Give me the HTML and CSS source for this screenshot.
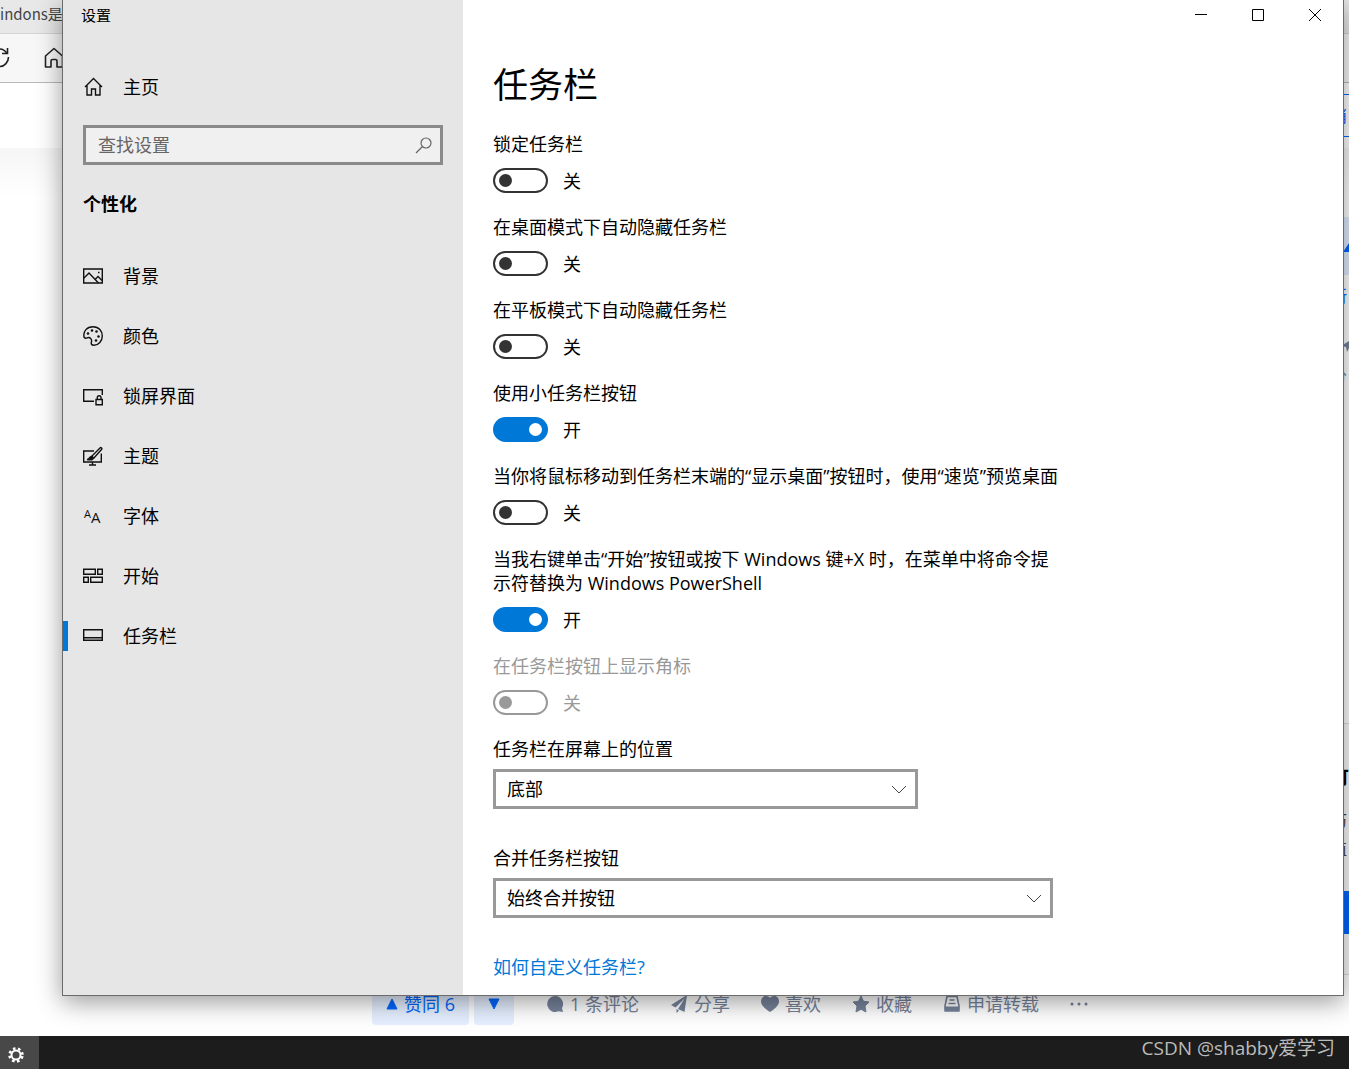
FILE: index.html
```html
<!DOCTYPE html>
<html lang="zh-CN">
<head>
<meta charset="utf-8">
<title>设置</title>
<link rel="stylesheet" href="styles.css">
</head>
<body>
<div class="desktop">
  <div class="browser">
    <div class="tabs">indons是否</div>
    <div class="toolbar">
      <svg width="18" height="24" viewBox="0 0 18 24" fill="none" stroke="#222" stroke-width="1.600"><path d="M0 3c3 0 5 1.500 7 4.500M7.500 2v5.500H2M8.500 11c0 5-4 9.500-8.500 9.500"/></svg>
      <svg width="20" height="22" viewBox="0 0 20 22" fill="none" stroke="#222" stroke-width="1.600"><path d="M1.500 9 10 1.500 18.500 9v11h-5.500v-6q0-1.500-1.500-1.500h-3q-1.500 0-1.500 1.500v6H1.500z" stroke-linejoin="round"/></svg>
    </div>
    <div class="page">
      <div class="page-head"></div>
      <div class="edge">
        <div class="edge-button">消</div>
        <div class="edge-vote"><svg width="16" height="12" viewBox="0 0 16 12"><path d="M8 0 16 12H0z" fill="#0066ff"/></svg></div>
        <div class="edge-link">所</div>
        <svg class="edge-share" width="16" height="16" viewBox="0 0 16 16"><path d="M0 10 16 0 13 16 8 12 6 16 5 11z" fill="#76839b"/></svg>
        <div class="edge-muted">分</div>
        <div class="edge-card">
          <div class="edge-title">可</div>
          <div class="edge-text">历</div>
          <div class="edge-text">值</div>
          <div class="edge-primary"></div>
        </div>
      </div>
    </div>
    <div class="actions">
      <button class="vote"><svg width="12" height="12" viewBox="0 0 12 12"><path d="M6 1 11 11H1z" fill="currentColor" stroke="currentColor" stroke-linejoin="round"/></svg>赞同 6</button>
      <button class="vote down" aria-label="反对"><svg width="12" height="12" viewBox="0 0 12 12"><path d="M6 11 11 1H1z" fill="currentColor" stroke="currentColor" stroke-linejoin="round"/></svg></button>
      <button class="action"><svg width="18" height="18" viewBox="0 0 18 18" fill="currentColor"><path d="M9 1a8 8 0 1 0 3.500 15.300L17 17l-1-4A8 8 0 0 0 9 1z"/></svg>1 条评论</button>
      <button class="action"><svg width="18" height="18" viewBox="0 0 18 18" fill="currentColor"><path d="M17 0 14.500 17 8 14 15 3 5.500 12.500 1 10z"/><path d="M6.500 14 9 15.500 6.500 18z"/></svg>分享</button>
      <button class="action"><svg width="18" height="18" viewBox="0 0 18 18" fill="currentColor"><path d="M9 3C7 0 0 0 0 6.500 0 11 6 15 9 17c3-2 9-6 9-10.500C18 0 11 0 9 3z"/></svg>喜欢</button>
      <button class="action"><svg width="18" height="18" viewBox="0 0 18 18" fill="currentColor" stroke="currentColor" stroke-linejoin="round"><path d="M9 1 11.500 6.200 17 7 13 11 14 17 9 14.300 4 17 5 11 1 7 6.500 6.200z"/></svg>收藏</button>
      <button class="action"><svg width="18" height="18" viewBox="0 0 18 18"><path d="M4 1.500h10L16 11v5H2v-5z" fill="none" stroke="currentColor" stroke-width="1.600" stroke-linejoin="round"/><path d="M2 11.500h14V16H2z" fill="currentColor"/><path d="M6.500 5h5M5.500 8.500h7" stroke="currentColor" stroke-width="1.500"/></svg>申请转载</button>
      <button class="action" aria-label="更多"><svg width="18" height="18" viewBox="0 0 18 18" fill="currentColor"><circle cx="2" cy="9" r="1.500"/><circle cx="9" cy="9" r="1.500"/><circle cx="16" cy="9" r="1.500"/></svg></button>
    </div>
  </div>

  <div class="window">
    <aside class="sidebar">
      <div class="caption">设置</div>
      <a class="nav-item home" href="#home"><svg width="20" height="20" viewBox="0 0 20 20" fill="none" stroke="#111" stroke-width="1.400"><path d="M2 10 10.500 1.500 19 10M4 8.500V18h4.500v-6h4v6H17V8.500"/></svg>主页</a>
      <div class="search">
        <input type="text" placeholder="查找设置" aria-label="查找设置">
        <svg width="18" height="18" viewBox="0 0 18 18" fill="none" stroke="#666" stroke-width="1.200"><circle cx="11" cy="7" r="5"/><path d="M7.500 10.500 1 17"/></svg>
      </div>
      <h2>个性化</h2>
      <nav>
        <a class="nav-item" href="#background"><svg width="20" height="20" viewBox="0 0 20 20" fill="none" stroke="#111" stroke-width="1.400"><path d="M.7 3h18.600v14H.7z"/><path d="M1 12 6 7l9.500 10M12 13.500l3-3 4 4"/><path d="M15 6.500h1.500"/></svg>背景</a>
        <a class="nav-item" href="#colors"><svg width="20" height="20" viewBox="0 0 20 20" fill="none" stroke="#111" stroke-width="1.400"><path d="M1 11C0 5 4 .7 10 .7S19.300 5 19.300 10 15.500 19.300 11 19.300c-3 0-3-2-2.500-3.500S8 12 6 11.500 3 14 1 11z"/><g fill="#111" stroke="none"><circle cx="5" cy="7.500" r="1.300"/><circle cx="9" cy="4.500" r="1.300"/><circle cx="13.500" cy="5.500" r="1.300"/><circle cx="15.500" cy="10.500" r="1.300"/><circle cx="13" cy="14.500" r="1.300"/></g></svg>颜色</a>
        <a class="nav-item" href="#lock"><svg width="20" height="20" viewBox="0 0 20 20" fill="none" stroke="#111" stroke-width="1.400"><path d="M11 15.300H.7V3.700h18.600V9"/><path d="M13 13.500h6.300v5.300H13zM14.300 13.500V11.500c0-2.400 3.700-2.400 3.700 0v2"/></svg>锁屏界面</a>
        <a class="nav-item" href="#themes"><svg width="20" height="20" viewBox="0 0 20 20" fill="none" stroke="#111" stroke-width="1.400"><path d="M11 5H.7v11h17.600V7.500M9.500 16v3M6 19h7"/><path d="M8.500 10.500 17 2c1-1 2.500.3 1.500 1.500l-8 9"/><path d="M4 13.500c3 0 2-3.500 5-3 2.500 1 1.500 4.500-5 3z" fill="#111"/></svg>主题</a>
        <a class="nav-item" href="#fonts"><svg class="font-icon" width="20" height="28" viewBox="0 -4 20 28" aria-hidden="true"><text x="1" y="12" font-size="11">A</text><text x="8" y="17" font-size="15">A</text></svg>字体</a>
        <a class="nav-item" href="#start"><svg width="20" height="20" viewBox="0 0 20 20" fill="none" stroke="#111" stroke-width="1.400"><path d="M.7 3.200h11.600v5H.7zM14.700 3.200h4.600v5h-4.600zM.7 11.200h4.600v5H.7zM7.700 11.200h11.600v5H7.700z"/></svg>开始</a>
        <a class="nav-item current" href="#taskbar" aria-current="page"><svg width="20" height="20" viewBox="0 0 20 20" fill="none" stroke="#111" stroke-width="1.400"><path d="M.7 3.700h18.600v10.600H.7zM1 11.700h18"/></svg>任务栏</a>
      </nav>
    </aside>
    <main>
      <div class="window-controls">
        <button aria-label="最小化"><svg width="12" height="12" viewBox="0 0 12 12"><path d="M0 5.500h12" stroke="#000"/></svg></button>
        <button aria-label="最大化"><svg width="12" height="12" viewBox="0 0 12 12"><path d="M.5.5h11v11H.5z" fill="none" stroke="#000"/></svg></button>
        <button aria-label="关闭"><svg width="12" height="12" viewBox="0 0 12 12"><path d="M0 0 12 12M12 0 0 12" stroke="#000"/></svg></button>
      </div>
      <div class="content">
        <h1>任务栏</h1>
        <div class="setting"><label for="t1">锁定任务栏</label><div class="switch"><input type="checkbox" id="t1"><span>关</span></div></div>
        <div class="setting"><label for="t2">在桌面模式下自动隐藏任务栏</label><div class="switch"><input type="checkbox" id="t2"><span>关</span></div></div>
        <div class="setting"><label for="t3">在平板模式下自动隐藏任务栏</label><div class="switch"><input type="checkbox" id="t3"><span>关</span></div></div>
        <div class="setting"><label for="t4">使用小任务栏按钮</label><div class="switch"><input type="checkbox" id="t4" checked><span>开</span></div></div>
        <div class="setting"><label for="t5">当你将鼠标移动到任务栏末端的“显示桌面”按钮时，使用“速览”预览桌面</label><div class="switch"><input type="checkbox" id="t5"><span>关</span></div></div>
        <div class="setting"><label for="t6">当我右键单击“开始”按钮或按下 Windows 键+X 时，在菜单中将命令提<br>示符替换为 Windows PowerShell</label><div class="switch"><input type="checkbox" id="t6" checked><span>开</span></div></div>
        <div class="setting disabled"><label for="t7">在任务栏按钮上显示角标</label><div class="switch"><input type="checkbox" id="t7" disabled><span>关</span></div></div>
        <div class="field">
          <label for="s1">任务栏在屏幕上的位置</label>
          <div class="select position"><select id="s1"><option>底部</option></select><svg width="16" height="10" viewBox="0 0 16 10"><path d="M1 2 8 9 15 2" fill="none" stroke="#444"/></svg></div>
        </div>
        <div class="field">
          <label for="s2">合并任务栏按钮</label>
          <div class="select"><select id="s2"><option>始终合并按钮</option></select><svg width="16" height="10" viewBox="0 0 16 10"><path d="M1 2 8 9 15 2" fill="none" stroke="#444"/></svg></div>
        </div>
        <a class="help" href="#help">如何自定义任务栏?</a>
      </div>
    </main>
  </div>
</div>
<footer class="taskbar">
  <button class="task" aria-label="设置"><svg width="16" height="16" viewBox="0 0 16 16" fill="none" stroke="#fff"><circle cx="8" cy="8" r="4.500" stroke-width="2"/><circle cx="8" cy="8" r="6.500" stroke-width="2.500" stroke-dasharray="2.600 2.505" stroke-dashoffset="-1.200"/></svg></button>
  <span class="watermark">CSDN @shabby爱学习</span>
</footer>
</body>
</html>
```
FILE: styles.css
```css
* { box-sizing: border-box; }
body {
  margin: 0;
  min-height: 100vh;
  display: flex;
  flex-direction: column;
  font: 18px/24px "Open Sans", "Noto Sans CJK SC", sans-serif;
  color: #000;
  background: #fff;
}
button { border: 0; padding: 0; background: none; font: inherit; color: inherit; }
a { color: inherit; text-decoration: none; }
svg { flex: none; display: block; }

.desktop { flex: 1; position: relative; display: flex; overflow: hidden; }
.browser { flex: 1; min-width: 0; display: flex; flex-direction: column; }
.tabs { height: 34px; padding-top: 2px; background: #e8e8e8; border-bottom: 1px solid #d4d4d4; font-family: "Noto Sans CJK SC", sans-serif; font-size: 15px; color: #444; }
.toolbar { height: 49px; display: flex; align-items: center; gap: 26px; background: #f7f7f7; border-bottom: 1px solid #b8b8b8; }
.page { flex: 1; position: relative; background: #fff; }
.page-head { height: 65px; }
.page-head::after { content: ""; display: block; margin-top: 65px; height: 50px; background: linear-gradient(#f6f6f6, #fff); }
.edge { position: absolute; top: 11px; right: 0; width: 18px; height: 100%; overflow: hidden; display: flex; flex-direction: column; align-items: flex-start; }
.edge-button { width: 18px; height: 43px; padding-top: 9px; border: solid #0066ff; border-width: 1px 0; color: #0066ff; font-size: 16px; }
.edge-vote { width: 18px; height: 58px; margin-top: 80px; padding: 23px 0 0 12px; background: #e0edff; }
.edge-link { margin-top: 9px; color: #0066ff; font-size: 16px; }
.edge-share { margin: 28px 0 0 10px; }
.edge-muted { margin-top: 12px; color: #76839b; font-size: 16px; }
.edge-card { width: 18px; height: 252px; margin-top: 335px; padding-top: 41px; border: solid #ddd; border-width: 1px 0; background: #fafafa; }
.edge-title { margin-bottom: 20px; font-weight: 700; }
.edge-text { margin-bottom: 4px; font-size: 16px; color: #444; }
.edge-primary { height: 43px; margin-top: 30px; background: #0066ff; }

.actions { display: flex; align-items: center; padding: 0 0 11px 372px; color: #76839b; }
.vote { width: 97px; height: 42px; display: flex; align-items: center; justify-content: center; gap: 6px; border-radius: 4px; background: #e5efff; color: #0066ff; }
.vote.down { width: 40px; margin: 0 1px 0 5px; }
.action { display: flex; align-items: center; gap: 6px; margin-left: 31px; }

.window {
  position: absolute;
  top: 0;
  left: 62px;
  right: 5px;
  display: flex;
  border: solid #6b6b6b;
  border-width: 0 1px 1px;
  background: #fff;
  box-shadow: 0 6px 24px rgba(0, 0, 0, .4);
}
.sidebar { width: 400px; flex: none; background: #e6e6e6; }
.caption { padding: 3px 18px 0; font-size: 15px; }
.nav-item { height: 60px; padding-left: 20px; display: flex; align-items: center; gap: 20px; }
.home { margin-top: 30px; }
.search { display: flex; align-items: center; height: 40px; margin: 8px 20px 27px; padding: 0 7px 0 12px; border: 3px solid #8a8a8a; background: #f0f0f0; }
.search input { flex: 1; min-width: 0; border: 0; padding: 0; outline: 0; background: none; font: inherit; }
.search input::placeholder { color: #666; opacity: 1; }
h2 { margin: 0 20px 30px; font-size: 18px; line-height: 24px; }
.current { border-left: 5px solid #0078d7; height: 30px; margin-top: 15px; padding-left: 15px; }
.font-icon { fill: #111; overflow: visible; }

main { flex: 1; min-width: 0; }
.window-controls { height: 30px; display: flex; justify-content: flex-end; }
.window-controls button { width: 57px; display: flex; align-items: center; justify-content: center; }
.content { padding: 30px 30px 16px; }
h1 { margin: 0 0 22px; font-size: 35px; line-height: 50px; font-weight: 400; }
label { display: block; }
.setting { margin-bottom: 22px; }
.setting label { margin-bottom: 12px; }
.switch { display: flex; align-items: center; gap: 15px; height: 25px; }
.switch input { appearance: none; flex: none; width: 55px; height: 25px; margin: 0; padding: 0 4px; display: flex; align-items: center; border: 2px solid #333; border-radius: 13px; }
.switch input::before { content: ""; width: 13px; height: 13px; border-radius: 50%; background: #333; }
.switch input:checked { justify-content: flex-end; border-color: #0078d7; background: #0078d7; }
.switch input:checked::before { background: #fff; }
.disabled { color: #999; }
.switch input:disabled { border-color: #999; }
.switch input:disabled::before { background: #999; }
.field { margin-bottom: 37px; }
.field label { margin-bottom: 8px; }
.select { display: grid; align-items: center; max-width: 560px; }
.select.position { max-width: 425px; }
.select select, .select svg { grid-area: 1 / 1; }
.select select { appearance: none; width: 100%; height: 40px; padding: 0 40px 0 11px; border: 3px solid #999; border-radius: 0; background: #fff; font: inherit; color: #000; }
.select svg { justify-self: end; margin-right: 11px; pointer-events: none; }
.help { display: block; color: #0078d7; }

.taskbar { height: 33px; display: flex; justify-content: space-between; background: #1c1c1c; }
.task { width: 39px; padding: 4px 0 0 8px; background: #484848; }
.watermark { padding-right: 14px; font-size: 19px; color: #bbb; }
```
